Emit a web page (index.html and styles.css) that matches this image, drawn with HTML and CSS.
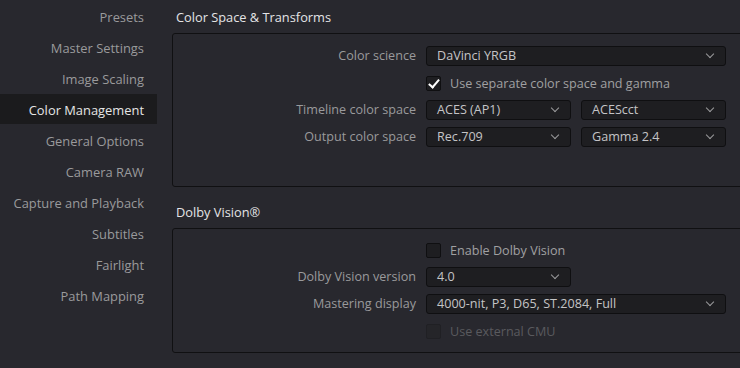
FILE: index.html
```html
<!DOCTYPE html>
<html lang="en">
<head>
	<meta charset="UTF-8">
	<title>Project Settings - Color Management</title>
	<link rel="stylesheet" href="styles.css">
</head>
<body>
	<div class="page">
		<ul class="nav">
			<li>Presets</li>
			<li>Master Settings</li>
			<li>Image Scaling</li>
			<li class="active">Color Management</li>
			<li>General Options</li>
			<li>Camera RAW</li>
			<li>Capture and Playback</li>
			<li>Subtitles</li>
			<li>Fairlight</li>
			<li>Path Mapping</li>
		</ul>
		<div class="main">
			<h2 class="title">Color Space &amp; Transforms</h2>
			<div class="box box-color">
				<div class="form">
					<label class="label">Color science</label>
					<div class="select wide"><span>DaVinci YRGB</span><i class="chev"></i></div>

					<span></span>
					<div class="check on"><b></b><span>Use separate color space and gamma</span></div>

					<label class="label">Timeline color space</label>
					<div class="pair">
						<div class="select"><span>ACES (AP1)</span><i class="chev"></i></div>
						<div class="select"><span>ACEScct</span><i class="chev"></i></div>
					</div>

					<label class="label">Output color space</label>
					<div class="pair">
						<div class="select"><span>Rec.709</span><i class="chev"></i></div>
						<div class="select"><span>Gamma 2.4</span><i class="chev"></i></div>
					</div>
				</div>
			</div>

			<h2 class="title title-2">Dolby Vision®</h2>
			<div class="box box-dolby">
				<div class="form">
					<span></span>
					<div class="check"><b></b><span>Enable Dolby Vision</span></div>

					<label class="label">Dolby Vision version</label>
					<div class="select half"><span>4.0</span><i class="chev"></i></div>

					<label class="label">Mastering display</label>
					<div class="select wide"><span>4000-nit, P3, D65, ST.2084, Full</span><i class="chev"></i></div>

					<span></span>
					<div class="check disabled"><b></b><span>Use external CMU</span></div>
				</div>
			</div>
		</div>
	</div>
</body>
</html>
```

FILE: styles.css
```css
*{
	padding:0;
	margin:0;
	list-style:none;
	box-sizing:border-box;
}
html,body{
	width:740px;
	height:368px;
	overflow:hidden;
	background-color:#28282e;
}
body{
	font-family:"Open Sans","Noto Sans","Liberation Sans",sans-serif;
	font-size:12.6px;
	color:#9c9c9e;
}
.page{
	display:flex;
	height:368px;
}
.nav{
	flex:0 0 157px;
	padding-top:1px;
}
.nav li{
	height:30px;
	margin-bottom:1px;
	padding:2px 13px 0 0;
	line-height:28px;
	font-size:12.9px;
	text-align:right;
	white-space:nowrap;
	color:#9a9a9c;
}
.nav li.active{
	background-color:#1b1b1d;
	color:#e6e6e6;
}
.main{
	flex:1;
	min-width:0;
	padding-left:15px;
	margin-right:-14px;
}
.title{
	height:33px;
	padding-left:4px;
	line-height:34px;
	font-size:12.8px;
	font-weight:normal;
	color:#e4e4e6;
}
.title-2{
	margin-top:8px;
}
.box{
	border:1px solid #101012;
	border-radius:3px;
}
.box-color{
	height:154px;
	padding-top:12px;
}
.box-dolby{
	height:125px;
	padding-top:11px;
}
.form{
	display:grid;
	grid-template-columns:243px 300px;
	grid-auto-rows:20px;
	column-gap:10px;
	row-gap:7px;
}
.label{
	line-height:20px;
	text-align:right;
	white-space:nowrap;
	color:#9a9a9c;
}
.select{
	position:relative;
	height:20px;
	padding-left:10px;
	border:1px solid #0f0f11;
	border-radius:3px;
	background-color:#1e1e21;
	line-height:18px;
	color:#c4c4c6;
	white-space:nowrap;
}
.select.half{
	width:145px;
}
.pair{
	display:flex;
	gap:10px;
}
.pair .select{
	flex:1;
}
.chev{
	position:absolute;
	right:12px;
	top:4px;
	width:6px;
	height:6px;
	border-right:1.5px solid #9a9a9c;
	border-bottom:1.5px solid #9a9a9c;
	transform:rotate(45deg);
}
.check{
	display:flex;
	align-items:center;
	gap:9px;
	color:#a0a0a2;
}
.check b{
	position:relative;
	flex:0 0 15px;
	width:15px;
	height:15px;
	border:1px solid #0f0f11;
	border-radius:2px;
	background-color:#1e1e21;
}
.check.on b:after{
	content:"";
	position:absolute;
	left:4px;
	top:0px;
	width:4px;
	height:9px;
	border-right:2px solid #fff;
	border-bottom:2px solid #fff;
	transform:rotate(40deg);
}
.check.disabled b{
	border-color:#202024;
	background-color:#252529;
}
.check.disabled span{
	color:#5a5a5e;
}
```
